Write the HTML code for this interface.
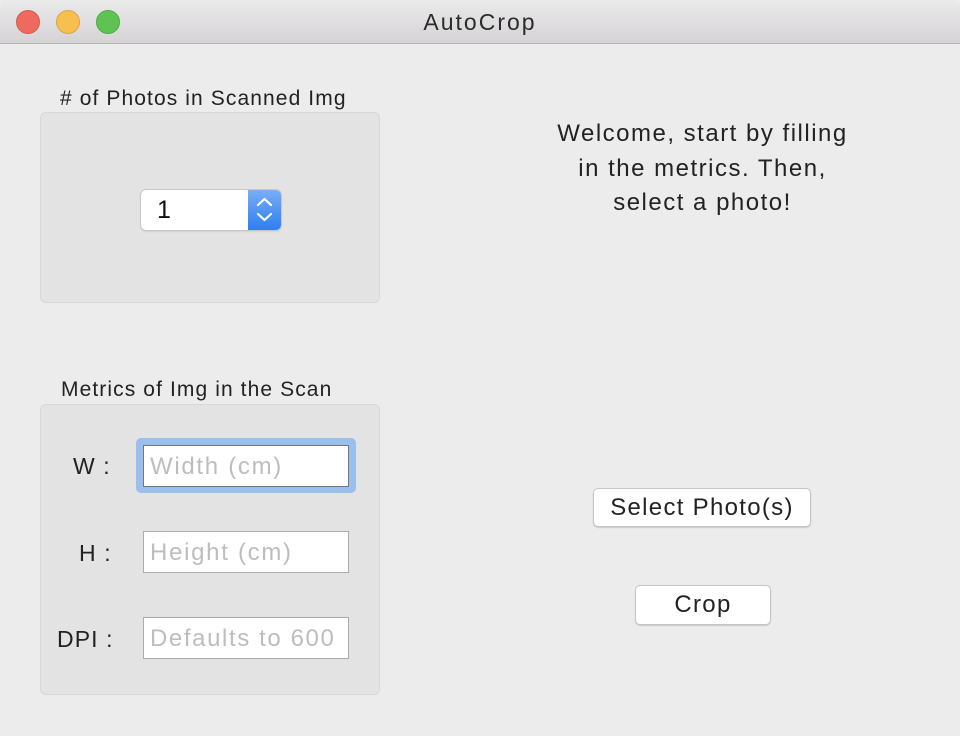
<!DOCTYPE html>
<html><head><meta charset="utf-8"><style>
*{margin:0;padding:0;box-sizing:border-box}
body{width:960px;height:736px;background:#ececec;font-family:"Liberation Sans",sans-serif;color:#222;position:relative;overflow:hidden}
.a{position:absolute}
.title{left:0;top:0;width:960px;height:44px;background:linear-gradient(#ebeaeb,#d5d3d5);border-bottom:1px solid #b4b4b4;border-radius:8px 8px 0 0}
.dot{width:24px;height:24px;border-radius:50%;top:10px}
.box{background:#e3e3e3;border:1px solid #d8d8d8;border-radius:6px}
.lbl{font-size:21px;white-space:nowrap;letter-spacing:1.1px}
.field{background:#fff;border:1px solid #ababab;font-size:24px;letter-spacing:1.7px;color:#bdbdbd;padding:4px 6px;height:42px;width:206px;line-height:34px;white-space:nowrap;overflow:hidden}
.btn{background:#fff;border:1px solid #c5c5c5;border-radius:5px;font-size:24px;letter-spacing:1.3px;text-align:center;box-shadow:0 1px 1px rgba(0,0,0,.15)}
</style></head><body>
<div class="a title"></div>
<div class="a dot" style="left:16px;background:#ee6a5e;border:1px solid #d55a4f"></div>
<div class="a dot" style="left:56px;background:#f6bf4f;border:1px solid #dba53f"></div>
<div class="a dot" style="left:96px;background:#5fc354;border:1px solid #4ea944"></div>
<div class="a" style="left:0;top:9px;width:960px;text-align:center;font-size:23px;letter-spacing:2px;color:#2b2b2b">AutoCrop</div>

<div class="a lbl" style="left:60px;top:87px"># of Photos in Scanned Img</div>
<div class="a box" style="left:40px;top:112px;width:340px;height:191px"></div>
<div class="a" style="left:141px;top:190px;width:140px;height:40px;background:#fff;border-radius:5px;box-shadow:0 0 0 1px #c8c8c8,0 1px 2px rgba(0,0,0,.2);overflow:hidden">
 <div class="a" style="left:16px;top:6px;font-size:25px;color:#111">1</div>
 <div class="a" style="left:107px;top:0;width:33px;height:40px;background:linear-gradient(#79aef5,#2d7ff2)">
  <svg width="33" height="40" viewBox="0 0 33 40"><path d="M10 15 L16.5 9 L23 15 M10 24 L16.5 30 L23 24" stroke="#fff" stroke-width="2.2" fill="none" stroke-linecap="round" stroke-linejoin="round"/></svg>
 </div>
</div>

<div class="a lbl" style="left:61px;top:378px">Metrics of Img in the Scan</div>
<div class="a box" style="left:40px;top:404px;width:340px;height:291px"></div>
<div class="a lbl" style="left:73px;top:453px;font-size:23px">W :</div>
<div class="a lbl" style="left:79px;top:540px;font-size:23px">H :</div>
<div class="a lbl" style="left:57px;top:626px;font-size:23px">DPI :</div>
<div class="a" style="left:136px;top:438px;width:220px;height:55px;border-radius:5px;background:#9bbfec"></div>
<div class="a field" style="left:143px;top:445px;border-color:#777">Width (cm)</div>
<div class="a field" style="left:143px;top:531px">Height (cm)</div>
<div class="a field" style="left:143px;top:617px;letter-spacing:1.6px">Defaults to 600</div>

<div class="a" style="left:500px;top:117px;width:405px;text-align:center;font-size:24px;letter-spacing:1.5px;line-height:34.5px;color:#222">Welcome, start by filling<br>in the metrics. Then,<br>select a photo!</div>

<div class="a btn" style="left:593px;top:488px;width:218px;height:39px;line-height:37px">Select Photo(s)</div>
<div class="a btn" style="left:635px;top:585px;width:136px;height:40px;line-height:38px">Crop</div>
</body></html>
